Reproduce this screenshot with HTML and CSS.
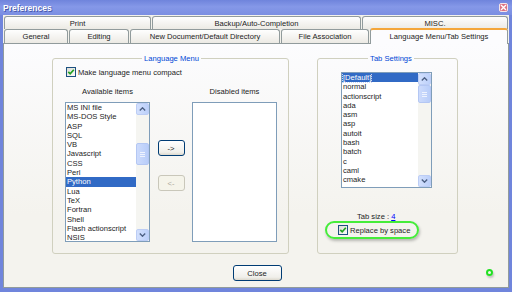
FILE: index.html
```html
<!DOCTYPE html>
<html lang="en">
<head>
<meta charset="UTF-8">
<title>Preferences</title>
<link rel="stylesheet" href="styles.css">
</head>
<body>
<div class="window">
  <div class="titlebar">
    <span class="title">Preferences</span>
    <span class="close-x">
      <svg width="7" height="7" viewBox="0 0 7 7"><path d="M1 1 L6 6 M6 1 L1 6" stroke="#fff" stroke-width="1.4"/></svg>
    </span>
  </div>
  <div class="frame">
    <div class="tab-row back">
      <div class="tab t-print">Print</div>
      <div class="tab t-backup">Backup/Auto-Completion</div>
      <div class="tab t-misc">MISC.</div>
    </div>
    <div class="tab-row front">
      <div class="tab t-general">General</div>
      <div class="tab t-editing">Editing</div>
      <div class="tab t-newdoc">New Document/Default Directory</div>
      <div class="tab t-assoc">File Association</div>
      <div class="tab t-lang active">Language Menu/Tab Settings</div>
    </div>
    <div class="panel">
      <div class="groups">
        <fieldset class="group lang-group">
          <legend>Language Menu</legend>
          <label class="check-row">
            <span class="checkbox"><svg width="8" height="8" viewBox="0 0 8 8"><path d="M1.3 3.8 L3.2 5.8 L6.8 1.8" fill="none" stroke="#21a121" stroke-width="1.7"/></svg></span>
            Make language menu compact
          </label>
          <div class="cols">
            <div class="col-title">Available items</div>
            <div></div>
            <div class="col-title">Disabled items</div>

            <div class="listbox">
              <div class="items">
                <div>MS INI file</div>
                <div>MS-DOS Style</div>
                <div>ASP</div>
                <div>SQL</div>
                <div>VB</div>
                <div>Javascript</div>
                <div>CSS</div>
                <div>Perl</div>
                <div class="selected">Python</div>
                <div>Lua</div>
                <div>TeX</div>
                <div>Fortran</div>
                <div>Shell</div>
                <div>Flash actionscript</div>
                <div>NSIS</div>
              </div>
              <div class="scrollbar">
                <div class="arrow"><svg width="7" height="4" viewBox="0 0 7 4"><path d="M0.8 3.4 L3.5 0.8 L6.2 3.4" fill="none" stroke="#4d6185" stroke-width="1.4"/></svg></div>
                <div class="track"><div class="thumb thumb-lang"><i></i><i></i><i></i></div></div>
                <div class="arrow"><svg width="7" height="4" viewBox="0 0 7 4"><path d="M0.8 0.6 L3.5 3.2 L6.2 0.6" fill="none" stroke="#4d6185" stroke-width="1.4"/></svg></div>
              </div>
            </div>
            <div class="move-buttons">
              <button class="btn">-&gt;</button>
              <button class="btn" disabled>&lt;-</button>
            </div>
            <div class="listbox"></div>
          </div>
        </fieldset>

        <fieldset class="group tab-group">
          <legend>Tab Settings</legend>
          <div class="listbox tab-list">
            <div class="items">
              <div class="selected"><span class="focus">[Default]</span></div>
              <div>normal</div>
              <div>actionscript</div>
              <div>ada</div>
              <div>asm</div>
              <div>asp</div>
              <div>autoit</div>
              <div>bash</div>
              <div>batch</div>
              <div>c</div>
              <div>caml</div>
              <div>cmake</div>
            </div>
            <div class="scrollbar">
              <div class="arrow"><svg width="7" height="4" viewBox="0 0 7 4"><path d="M0.8 3.4 L3.5 0.8 L6.2 3.4" fill="none" stroke="#4d6185" stroke-width="1.4"/></svg></div>
              <div class="track"><div class="thumb thumb-tab"><i></i><i></i><i></i></div></div>
              <div class="arrow"><svg width="7" height="4" viewBox="0 0 7 4"><path d="M0.8 0.6 L3.5 3.2 L6.2 0.6" fill="none" stroke="#4d6185" stroke-width="1.4"/></svg></div>
            </div>
          </div>
          <div class="tab-size">Tab size : <a href="#">4</a></div>
          <label class="highlight">
            <span class="checkbox"><svg width="8" height="8" viewBox="0 0 8 8"><path d="M1.3 3.8 L3.2 5.8 L6.8 1.8" fill="none" stroke="#21a121" stroke-width="1.7"/></svg></span>
            Replace by space
          </label>
        </fieldset>
      </div>
      <div class="footer">
        <button class="btn close-btn">Close</button>
      </div>
    </div>
  </div>
  <span class="dot"></span>
</div>
</body>
</html>
```

FILE: styles.css
```css
* {
  box-sizing: border-box;
}
body {
  margin: 0;
  font-family: "Liberation Sans", Arial, sans-serif;
  font-size: 7.6px;
  color: #1c1c1c;
  background: #fff;
}
.window {
  position: relative;
  width: 512px;
  height: 292px;
  display: flex;
  flex-direction: column;
}
.titlebar {
  height: 15px;
  display: flex;
  align-items: center;
  justify-content: space-between;
  padding: 0 4px 0 3px;
  background: linear-gradient(#6f84dc, #8598e8 45%, #7a8ee2);
}
.title {
  color: #fff;
  font-weight: bold;
  font-size: 8.5px;
  text-shadow: 1px 1px 0 #4456a8;
}
.close-x {
  width: 9px;
  height: 9px;
  display: flex;
  align-items: center;
  justify-content: center;
  background: #dc7282;
  border: 1px solid #f4e4ea;
  border-radius: 2px;
}
.frame {
  flex: 1;
  display: flex;
  flex-direction: column;
  border: solid #7085dc;
  border-width: 0 3px 4px 3px;
  padding-top: 1px;
  background: #f3f2ec;
}

/* tabs */
.tab-row {
  display: flex;
  gap: 1px;
  padding-left: 1px;
}
.tab-row.back {
  height: 13px;
}
.tab-row.front {
  height: 14px;
}
.tab {
  display: flex;
  align-items: center;
  justify-content: center;
  border: 1px solid #919b9c;
  border-bottom: none;
  border-radius: 3px 3px 0 0;
  background: linear-gradient(#fefefe, #eceae4);
  white-space: nowrap;
}
.tab.active {
  position: relative;
  z-index: 1;
  height: 16px;
  margin-top: -1px;
  padding-bottom: 2px;
  border-top: 2px solid #f4a63a;
  background: #fcfcfe;
}
.t-print { width: 147px; }
.t-backup { width: 209px; }
.t-misc { width: 146px; }
.t-general { width: 64px; }
.t-editing { width: 60px; }
.t-newdoc { width: 150px; }
.t-assoc { width: 88px; }
.t-lang { width: 138px; }

.panel {
  flex: 1;
  display: flex;
  flex-direction: column;
  border: 1px solid #919b9c;
  padding: 10px 50px 0 48px;
  background: linear-gradient(#fcfcfe, #f4f3ee 70%);
}
.groups {
  display: flex;
  gap: 28px;
}
.group {
  margin: 0;
  border: 1px solid #d0d0bf;
  border-radius: 3px;
}
.group legend {
  margin: 0 auto;
  padding: 0 2px;
  color: #0046d5;
  line-height: 9px;
}
.lang-group {
  width: 237px;
  padding: 4px 10px 11px 12px;
}
.tab-group {
  width: 141px;
  padding: 9px 0 12px 7px;
}

/* checkbox */
.check-row {
  display: flex;
  align-items: center;
  gap: 2px;
  height: 10px;
  margin-left: 1px;
}
.checkbox {
  width: 10px;
  height: 10px;
  display: flex;
  align-items: center;
  justify-content: center;
  border: 1px solid #1c5180;
  background: linear-gradient(135deg, #dcdcd7, #fbfbf9);
}

.cols {
  display: grid;
  grid-template-columns: 85px 42px 85px;
  grid-template-rows: 9px 140px;
  row-gap: 6px;
  margin-top: 10px;
}
.col-title {
  text-align: center;
  line-height: 9px;
}

/* list boxes */
.listbox {
  display: flex;
  border: 1px solid #7f9db9;
  background: #fff;
  overflow: hidden;
}
.items {
  flex: 1;
  overflow: hidden;
  line-height: 9.3px;
}
.items div {
  padding-left: 1px;
  white-space: nowrap;
}
.items .selected {
  background: #316ac5;
  color: #fff;
}
.items .focus {
  outline: 1px dotted #c9d8f2;
}
.scrollbar {
  width: 13px;
  display: flex;
  flex-direction: column;
  background: #f5f5f1;
}
.arrow {
  height: 12px;
  display: flex;
  align-items: center;
  justify-content: center;
  border: 1px solid #bccdf5;
  border-radius: 2px;
  background: linear-gradient(90deg, #d3e0fd, #bcd0fa);
}
.track {
  flex: 1;
}
.thumb {
  display: flex;
  flex-direction: column;
  align-items: center;
  justify-content: center;
  gap: 1px;
  border: 1px solid #b4c7f3;
  border-radius: 2px;
  background: linear-gradient(90deg, #cddbfc, #b8cdf9);
}
.thumb i {
  width: 5px;
  height: 1px;
  background: #eef3fe;
}
.thumb-lang {
  height: 22px;
  margin-top: 28px;
}
.thumb-tab {
  height: 18px;
  margin-top: 0;
}

.move-buttons {
  display: flex;
  flex-direction: column;
  align-items: center;
  gap: 19px;
  padding-top: 38px;
}
.btn {
  height: 16px;
  padding: 0;
  font: inherit;
  color: #1c1c1c;
  border: 1px solid #003c74;
  border-radius: 3px;
  background: linear-gradient(#fff, #f0efea 80%, #dcd8cd);
}
.move-buttons .btn {
  width: 27px;
}
.btn:disabled {
  color: #aca899;
  border-color: #c9c7ba;
  background: #f5f4ea;
}

.tab-list {
  width: 91px;
  height: 116px;
  margin-left: 16px;
}
.tab-size {
  margin: 24px 0 0 32px;
  line-height: 9px;
}
.tab-size a {
  color: #0000ff;
}
.highlight {
  display: flex;
  align-items: center;
  gap: 2px;
  width: 94px;
  height: 18px;
  margin-top: 0;
  padding-left: 11px;
  border: 2px solid #45ec3a;
  border-radius: 9px;
  box-shadow: 1px 2px 3px rgba(0, 0, 0, 0.25);
}

.footer {
  display: flex;
  justify-content: center;
  margin: 11px 0 0 4px;
}
.close-btn {
  width: 49px;
}

.dot {
  position: absolute;
  left: 486px;
  top: 269px;
  width: 7px;
  height: 7px;
  border: 2px solid #22e022;
  border-radius: 50%;
  box-shadow: 1px 2px 2px rgba(0, 0, 0, 0.2);
}
```
